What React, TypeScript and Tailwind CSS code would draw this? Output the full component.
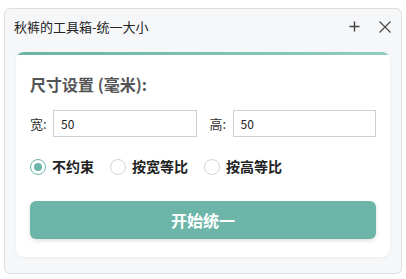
const FONT = "font-['Microsoft_YaHei','Noto_Sans_CJK_SC',sans-serif]";

function Radio({ label, checked }: { label: string; checked?: boolean }) {
  return (
    <label className="flex items-center gap-[6px]">
      <span
        className={[
          "flex h-[16px] w-[16px] items-center justify-center rounded-full border",
          checked ? "border-[#6db5a9]" : "border-[#d4d4d4]",
        ].join(" ")}
      >
        {checked && <span className="h-[8px] w-[8px] rounded-full bg-[#6db5a9]" />}
      </span>
      <span className="text-[14px] font-bold text-[#222]">{label}</span>
    </label>
  );
}

function SizeInput({ label, value }: { label: string; value: string }) {
  return (
    <div className="flex min-w-0 flex-1 items-center">
      <span className="w-[23px] shrink-0 text-[13px] text-[#333]">{label}</span>
      <input
        defaultValue={value}
        className="h-[27px] w-0 min-w-0 flex-1 border border-[#d0d0d0] bg-white px-[7px] text-[12px] text-[#222] outline-none"
      />
    </div>
  );
}

export default function App() {
  return (
    <div className={`h-[279px] w-[406px] bg-white px-[4px] pt-[8px] ${FONT}`}>
      <div className="flex h-[266px] w-[398px] flex-col rounded-[6px] border border-[#dedede] bg-[#f6f7f9]">
        <div className="flex h-[35px] items-center justify-between pl-[9px] pr-[10px]">
          <span className="text-[13px] text-[#222]">秋裤的工具箱-统一大小</span>
          <div className="flex items-center gap-[19px]">
            <svg width="11" height="11" viewBox="0 0 11 11" className="text-[#444]">
              <path d="M5.5 0.5v10M0.5 5.5h10" stroke="currentColor" strokeWidth="1.4" />
            </svg>
            <svg width="12" height="12" viewBox="0 0 12 12" className="text-[#444]">
              <path d="M0.5 0.5l11 11M11.5 0.5l-11 11" stroke="currentColor" strokeWidth="1.1" />
            </svg>
          </div>
        </div>

        <div className="mx-[11px] mt-[8px] overflow-hidden rounded-[8px] bg-white shadow-[0_1px_3px_rgba(0,0,0,0.06)]">
          <div className="h-[3px] bg-gradient-to-r from-[#6ab3a6] to-[#8fcdc2]" />
          <div className="px-[14px] pb-[18px] pt-[17px]">
            <h2 className="h-[24px] text-[16px] font-bold leading-[24px] text-[#555]">尺寸设置 (毫米):</h2>

            <div className="mt-[14px] flex gap-[13px]">
              <SizeInput label="宽:" value="50" />
              <SizeInput label="高:" value="50" />
            </div>

            <div className="mt-[19px] flex items-center gap-[16px]">
              <Radio label="不约束" checked />
              <Radio label="按宽等比" />
              <Radio label="按高等比" />
            </div>

            <button
              type="button"
              className="mt-[24px] h-[38px] w-full rounded-[6px] bg-[#6db5a9] text-[16px] font-bold text-white shadow-[0_2px_4px_rgba(0,0,0,0.12)]"
            >
              开始统一
            </button>
          </div>
        </div>
      </div>
    </div>
  );
}
